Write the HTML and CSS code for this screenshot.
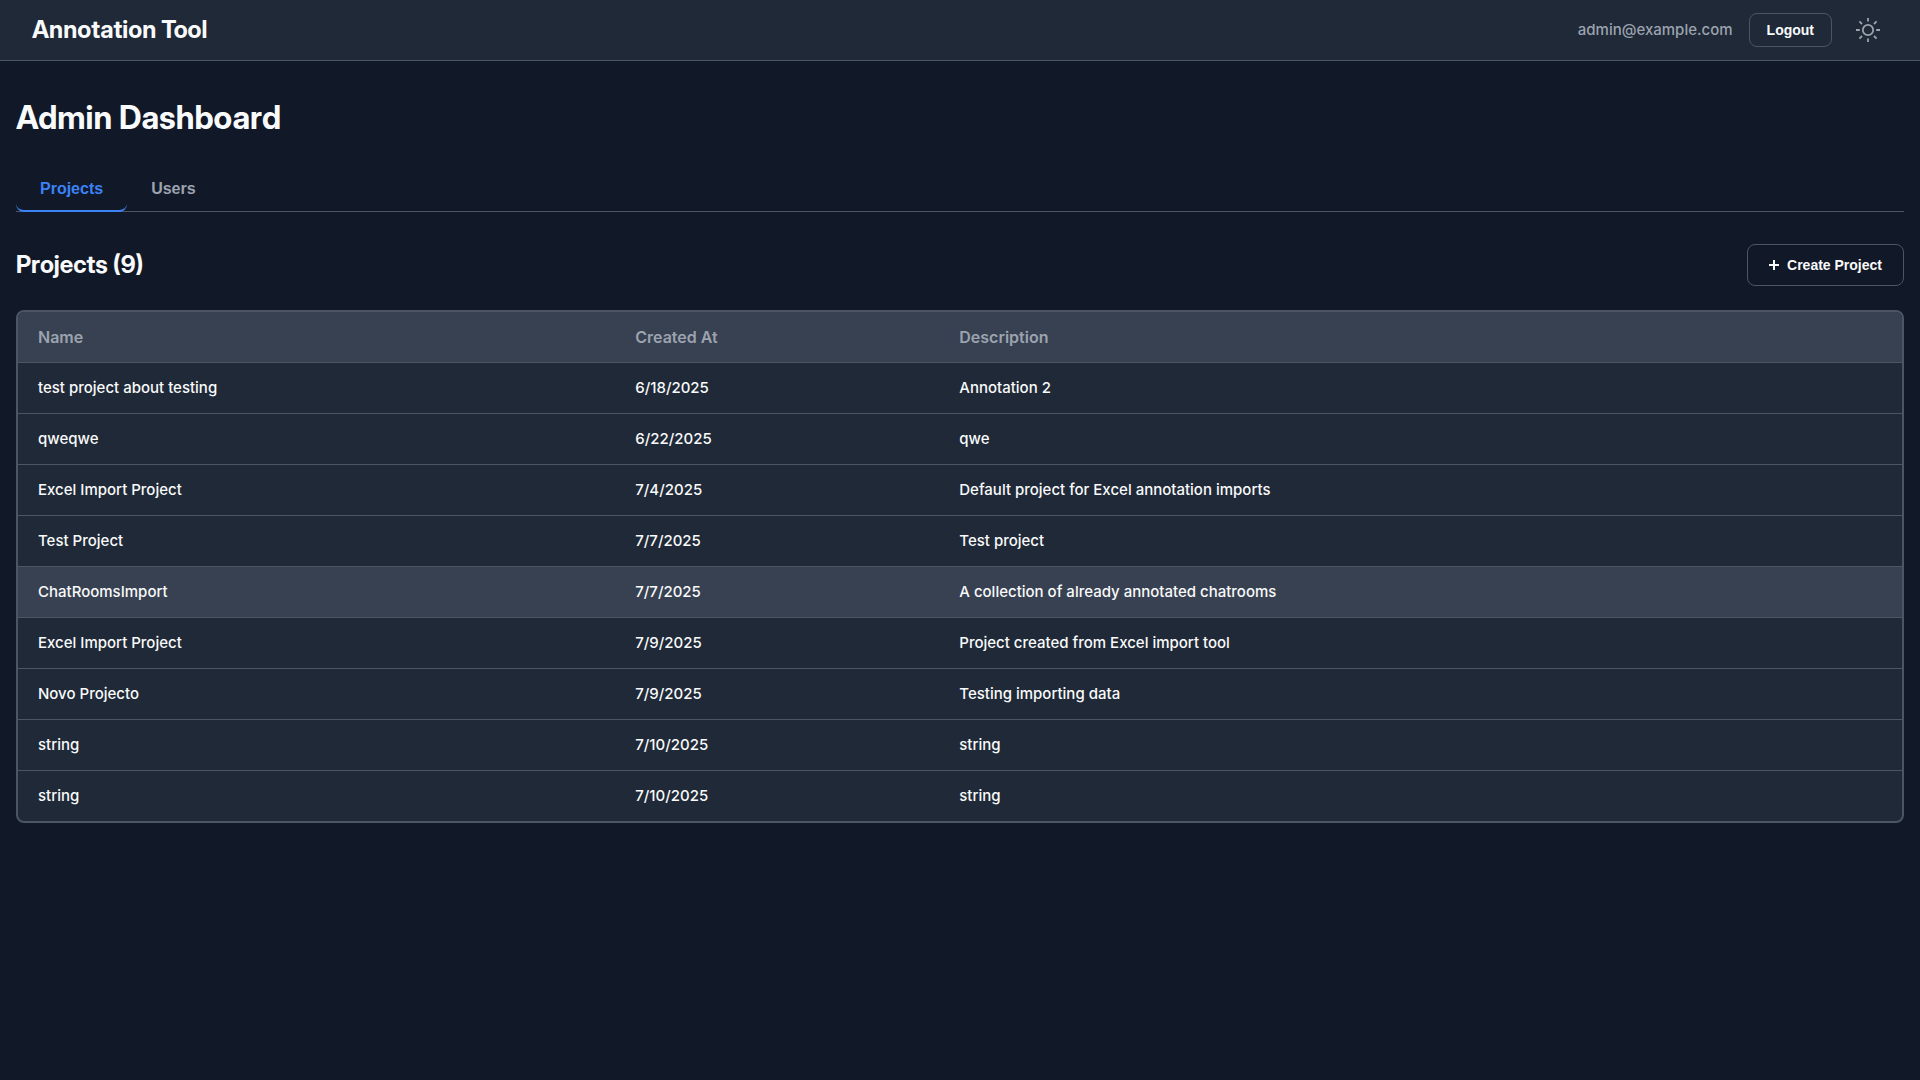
FILE: index.html
```html
<!DOCTYPE html>
<html lang="en">
<head>
<meta charset="utf-8">
<meta name="viewport" content="width=device-width, initial-scale=1">
<title>Annotation Tool</title>
<link rel="stylesheet" href="styles.css">
</head>
<body>
<header class="topbar">
  <div class="brand">Annotation Tool</div>
  <div class="account">
    <span class="email">admin@example.com</span>
    <button class="btn btn-small" type="button">Logout</button>
    <button class="theme-toggle" type="button" aria-label="Toggle theme">
      <svg width="24" height="24" viewBox="0 0 24 24" fill="none" stroke="currentColor" stroke-width="1.8">
        <circle cx="12" cy="12" r="5.2"/>
        <path d="M12 0v3.6M12 20.4V24M0 12h3.8M20.2 12H24M3.4 3.4l2.6 2.6M18 18l2.6 2.6M3.4 20.6l2.6-2.6M18 6l2.6-2.6"/>
      </svg>
    </button>
  </div>
</header>
<main class="page">
  <h1 class="page-title">Admin Dashboard</h1>
  <nav class="tabs">
    <button class="tab tab-active" type="button">Projects</button>
    <button class="tab" type="button">Users</button>
  </nav>
  <section>
    <div class="section-head">
      <h2 class="section-title">Projects (9)</h2>
      <button class="btn btn-create" type="button">
        <svg width="10" height="10" viewBox="0 0 10 10" fill="none" stroke="currentColor" stroke-width="2" aria-hidden="true"><path d="M5 0v10M0 5h10"/></svg>
        Create Project
      </button>
    </div>
    <div class="table-wrap">
      <table class="table">
        <colgroup><col class="col-name"><col class="col-date"><col></colgroup>
        <thead>
          <tr><th>Name</th><th>Created At</th><th>Description</th></tr>
        </thead>
        <tbody>
          <tr><td>test project about testing</td><td>6/18/2025</td><td>Annotation 2</td></tr>
          <tr><td>qweqwe</td><td>6/22/2025</td><td>qwe</td></tr>
          <tr><td>Excel Import Project</td><td>7/4/2025</td><td>Default project for Excel annotation imports</td></tr>
          <tr><td>Test Project</td><td>7/7/2025</td><td>Test project</td></tr>
          <tr class="row-hover"><td>ChatRoomsImport</td><td>7/7/2025</td><td>A collection of already annotated chatrooms</td></tr>
          <tr><td>Excel Import Project</td><td>7/9/2025</td><td>Project created from Excel import tool</td></tr>
          <tr><td>Novo Projecto</td><td>7/9/2025</td><td>Testing importing data</td></tr>
          <tr><td>string</td><td>7/10/2025</td><td>string</td></tr>
          <tr><td>string</td><td>7/10/2025</td><td>string</td></tr>
        </tbody>
      </table>
    </div>
  </section>
</main>
</body>
</html>
```
FILE: styles.css
```css
:root {
  --bg: #111827;
  --surface: #1f2937;
  --raised: #374151;
  --line: #4b5563;
  --text: #f9fafb;
  --muted: #9ca3af;
  --accent: #3b82f6;
  --display: "Inter Display", Inter, sans-serif;
}

* { box-sizing: border-box; }

body {
  margin: 0;
  min-height: 100vh;
  background: var(--bg);
  color: var(--text);
  font: 500 15px/24px Inter, sans-serif;
}

.topbar {
  display: flex;
  align-items: center;
  justify-content: space-between;
  padding: 12px 32px;
  background: var(--surface);
  border-bottom: 1px solid var(--line);
}

.brand { font: 700 24px/36px var(--display); }

.account { display: flex; align-items: center; gap: 16px; }

.email { color: var(--muted); }

.btn {
  border: 1px solid var(--line);
  border-radius: 8px;
  background: transparent;
  color: var(--text);
  font: 700 14px/16px "Liberation Sans", Arial, sans-serif;
}

.btn-small { padding: 8px 17px; }

.btn-create {
  display: flex;
  align-items: center;
  gap: 8px;
  padding: 12px 21px;
}

.theme-toggle {
  display: flex;
  padding: 0 8px;
  border: 0;
  background: transparent;
  color: var(--muted);
}

.page { padding: 32px 16px; }

.page-title { margin: 0 0 24px; font: 700 32px/50px var(--display); }

.tabs { display: flex; border-bottom: 1px solid var(--line); margin-bottom: 32px; }

.tab {
  margin-bottom: -1px;
  padding: 12px 24px 11px;
  border: 0;
  border-bottom: 2px solid transparent;
  border-radius: 8px;
  background: transparent;
  color: var(--muted);
  font: 700 16px/20px "Liberation Sans", Arial, sans-serif;
}

.tab-active { color: var(--accent); border-bottom-color: var(--accent); }

.section-head {
  display: flex;
  align-items: center;
  justify-content: space-between;
  margin-bottom: 24px;
}

.section-title { margin: 0; font: 700 24px/36px var(--display); }

.table-wrap {
  overflow: hidden;
  border: 2px solid var(--line);
  border-radius: 8px;
  background: var(--surface);
}

.table { width: 100%; border-collapse: separate; border-spacing: 0; table-layout: fixed; }

.col-name { width: 31.7%; }
.col-date { width: 17.2%; }

.table th,
.table td {
  padding: 13px 20px;
  border-bottom: 1px solid var(--line);
  text-align: left;
}

.table th { background: var(--raised); color: var(--muted); font-size: 16px; font-weight: 600; }

.table tbody tr:last-child td { border-bottom: 0; }

.row-hover td,
.table tbody tr:hover td { background: var(--raised); }
```
